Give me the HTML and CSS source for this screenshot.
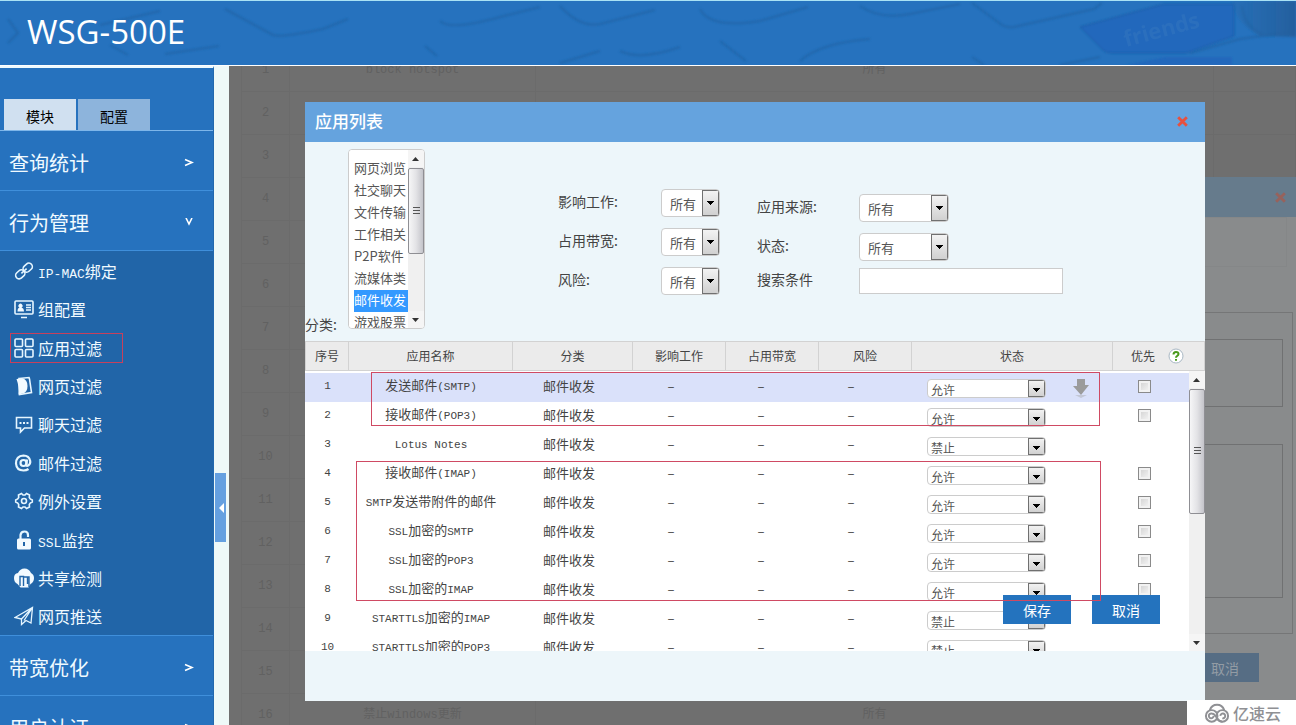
FILE: index.html
```html
<!DOCTYPE html>
<html lang="zh-CN">
<head>
<meta charset="utf-8">
<title>WSG-500E</title>
<link rel="stylesheet" href="styles.css">
</head>
<body>
<header class="banner">
  <svg class="banner-art" viewBox="0 0 1296 64" preserveAspectRatio="xMaxYMin slice" aria-hidden="true">
    <defs>
      <filter id="soft"><feGaussianBlur stdDeviation="1"/></filter>
      <linearGradient id="shade" x1="0" x2="1"><stop offset="0" stop-color="#2565a4" stop-opacity=".3"/><stop offset="1" stop-color="#245f9e"/></linearGradient>
    </defs>
    <g filter="url(#soft)" fill="none" stroke="#1f5f9f" stroke-width="2" opacity=".6">
      <path d="M8 18l10 14-10 10M100 24l60-14M110 44l18 10M165 53l54-8M225 8l48 26q8 3 50-6l25-10M425 45l12 10M440 20q10 10 60-4l40-10M560 5q20 22 40 18l55-14M620 50q20 10 60-4M700 8q10 20 60 12l48-14M800 60q20-18 70-22M860 5q20 14 50 8l50-10M720 40l26 20M560 62l40-12"/>
      <path d="M972 2l30 22q5 3 12 2l80-18 8-6M972 56l12 8M1100 56l-40 8M1190 52l50-14 56-8M1242 5q2 20 20 28"/>
    </g>
    <path filter="url(#soft)" fill="#2068bc" stroke="#1d5ca6" d="M1080 26l84-23h70v32l-48 17h-74q-6 0-9-3z"/>
    <path filter="url(#soft)" fill="url(#shade)" d="M1232 0h64v36l-36-1q-24-12-28-35z"/>
    <path filter="url(#soft)" fill="#2068bc" d="M1126 64l40-8h66v8z"/>
    <text class="banner-key" x="1126" y="46" transform="rotate(-15 1126 46)">friends</text>
  </svg>
  <h1 class="banner-title">WSG-500E</h1>
</header>
<div class="layout">
  <nav class="sidebar">
    <div class="tabs">
      <button class="tab tab-active" type="button">模块</button>
      <button class="tab" type="button">配置</button>
    </div>
    <a class="section" href="#">查询统计<svg class="chev" viewBox="0 0 10 10"><path d="M1 1.500l7 3-7 3"/></svg></a>
    <a class="section" href="#">行为管理<svg class="chev" viewBox="0 0 10 10"><path d="M2 0l3 6 3-6"/></svg></a>
    <ul class="submenu">
      <li><a class="item" href="#"><svg class="ico" viewBox="0 0 20 20"><g transform="rotate(-42 10 10)"><rect x="0" y="6.500" width="10" height="7" rx="3.500"/><rect x="10" y="6.500" width="10" height="7" rx="3.500"/><path d="M6.500 10h7"/></g></svg><span><span class="latin">IP-MAC</span>绑定</span></a></li>
      <li><a class="item" href="#"><svg class="ico" viewBox="0 0 20 20"><rect x="1" y="2" width="18" height="13" rx="1"/><path d="M7 18.500h6M12 6h5M12 8.500h5M12 11h5"/><path class="solid" d="M3.500 12.500c0-3 1-3.500 2-4a2 2 0 1 1 2 0c1 .500 2.500 1 2.500 4z"/></svg>组配置</a></li>
      <li><a class="item item-marked" href="#"><svg class="ico" viewBox="0 0 20 20"><rect x="1" y="1" width="7.500" height="7.500" rx="1"/><rect x="11.500" y="1" width="7.500" height="7.500" rx="1"/><rect x="1" y="11.500" width="7.500" height="7.500" rx="1"/><rect x="11.500" y="11.500" width="7.500" height="7.500" rx="1"/></svg>应用过滤</a></li>
      <li><a class="item" href="#"><svg class="ico" viewBox="0 0 20 20"><path d="M5 2.500l10-1 .500 1.500 2 13.500-12 2z"/><path class="solid" d="M2.500 3l6-.5q5 1 5 7.500t-5 7.500l-4 1q1-7-2-15.500z"/></svg>网页过滤</a></li>
      <li><a class="item" href="#"><svg class="ico" viewBox="0 0 20 20"><path d="M2.500 3.500h15v10.500h-7l-4 4v-4h-4z"/><path class="dots" d="M5.500 9h2M9 9h2M12.500 9h2"/></svg>聊天过滤</a></li>
      <li><a class="item" href="#"><svg class="ico" viewBox="0 0 20 20"><g class="bold"><circle cx="9.500" cy="10" r="3"/><path d="M13 6.500l-.8 5q.2 2 2 1 2.500-1.500 2-4.500Q15 2.500 9.500 2.500 2 3 2 10.500 2.500 17.500 9.500 17.500q3 0 5-1.500"/></g></svg>邮件过滤</a></li>
      <li><a class="item" href="#"><svg class="ico" viewBox="0 0 20 20"><circle cx="10" cy="10" r="2.500"/><path d="M7.500 2.500L9 4h2l1.500-1.500 3 1.500-.2 2.500 1 1.500 2 1v2l-2 1-1 1.500.2 2.500-3 1.500L11 16H9l-1.500 1.500-3-1.500.2-2.500-1-1.500-2-1V9l2-1 1-1.500L4.500 4z"/></svg>例外设置</a></li>
      <li><a class="item" href="#"><svg class="ico" viewBox="0 0 20 20"><path class="bold" d="M6.500 9V5q.5-3.500 4-3.500T14 5v2"/><path class="solid" fill-rule="evenodd" d="M4.500 8.500h11q1.500 0 1.500 1.500v8q0 1.500-1.500 1.500h-11Q3 19.500 3 18v-8q0-1.500 1.500-1.500zM9 12v4h2v-4z"/></svg><span><span class="latin">SSL</span>监控</span></a></li>
      <li><a class="item" href="#"><svg class="ico" viewBox="0 0 20 20"><path class="solid" d="M4 5Q6 .500 10.500.500 15 .500 17 5q3 1.500 3 5 0 4-3.500 6l-2 3.500h-8L3.500 16Q0 14.500 0 10t4-5z"/><path class="knock" d="M6 18V8.500h3.500V18M9.500 9h4v7M13.500 9h1.500v10"/></svg>共享检测</a></li>
      <li><a class="item" href="#"><svg class="ico" viewBox="0 0 20 20"><path class="thin" d="M1 11.500L18.500 1.500 17 17l-5-2.500-4.500 4V13zM7.500 13l11-11.500L10 14.500"/></svg>网页推送</a></li>
    </ul>
    <a class="section" href="#">带宽优化<svg class="chev" viewBox="0 0 10 10"><path d="M1 1.500l7 3-7 3"/></svg></a>
    <a class="section" href="#">用户认证<svg class="chev" viewBox="0 0 10 10"><path d="M1 1.500l7 3-7 3"/></svg></a>
  </nav>
  <div class="gutter"><button class="collapse" type="button" aria-label="收起"><svg viewBox="0 0 6 10"><path d="M6 0v10L1 5z"/></svg></button></div>
  <main class="stage">
    <table class="rules">
      <colgroup><col class="r-no"><col class="r-name"><col><col class="r-op"></colgroup>
      <tr><td>1</td><td>block hotspot</td><td>所有</td><td></td></tr>
      <tr><td>2</td><td></td><td></td><td></td></tr>
      <tr><td>3</td><td></td><td></td><td></td></tr>
      <tr><td>4</td><td></td><td></td><td></td></tr>
      <tr><td>5</td><td></td><td></td><td></td></tr>
      <tr><td>6</td><td></td><td></td><td></td></tr>
      <tr><td>7</td><td></td><td></td><td></td></tr>
      <tr><td>8</td><td></td><td></td><td></td></tr>
      <tr><td>9</td><td></td><td></td><td></td></tr>
      <tr><td>10</td><td></td><td></td><td></td></tr>
      <tr><td>11</td><td></td><td></td><td></td></tr>
      <tr><td>12</td><td></td><td></td><td></td></tr>
      <tr><td>13</td><td></td><td></td><td></td></tr>
      <tr><td>14</td><td></td><td></td><td></td></tr>
      <tr><td>15</td><td></td><td></td><td></td></tr>
      <tr><td>16</td><td>禁止windows更新</td><td>所有</td><td></td></tr>
    </table>

    <section class="under">
      <div class="under-head"><svg class="x" viewBox="0 0 12 12"><path d="M2 2l8 8M10 2l-8 8"/></svg></div>
      <div class="under-strip"></div>
      <div class="under-box"><div class="under-a"></div><div class="under-b"></div></div>
      <div class="under-foot"><button class="under-btn" type="button">取消</button></div>
    </section>

    <section class="modal" role="dialog" aria-labelledby="dlg-title">
      <div class="modal-head">
        <h2 id="dlg-title" class="modal-title">应用列表</h2>
        <button class="close" type="button" aria-label="关闭"><svg class="x" viewBox="0 0 12 12"><path d="M2 2l8 8M10 2l-8 8"/></svg></button>
      </div>
      <form class="filters">
        <label class="cat-label" for="cat">分类:</label>
        <div class="cat-box">
          <select class="cat-list" id="cat" size="8">
            <option>网页浏览</option><option>社交聊天</option><option>文件传输</option><option>工作相关</option><option>P2P软件</option><option>流媒体类</option><option class="chosen">邮件收发</option><option>游戏股票</option>
          </select>
          <div class="bar" aria-hidden="true">
            <svg class="bar-end" viewBox="0 0 16 17"><path d="M4 11h7L7.500 7z"/></svg>
            <div class="bar-track"><div class="bar-thumb bar-thumb-cat"></div></div>
            <svg class="bar-end" viewBox="0 0 16 17"><path d="M4 7h7l-3.500 4z"/></svg>
          </div>
        </div>
        <div class="group group-a">
          <label for="f1">影响工作:</label><select class="pick" id="f1"><option>所有</option></select>
          <label for="f2">占用带宽:</label><select class="pick" id="f2"><option>所有</option></select>
          <label for="f3">风险:</label><select class="pick" id="f3"><option>所有</option></select>
        </div>
        <div class="group group-b">
          <label for="f4">应用来源:</label><select class="pick pick-wide" id="f4"><option>所有</option></select>
          <label for="f5">状态:</label><select class="pick pick-wide" id="f5"><option>所有</option></select>
          <label class="search-label" for="f6">搜索条件</label><input class="search" id="f6" type="text">
        </div>
      </form>
      <table class="grid-head">
        <colgroup><col class="h-no"><col><col class="h-cat"><col class="h-mid"><col class="h-mid"><col class="h-mid"><col class="h-state"><col class="h-prio"></colgroup>
        <tr><th>序号</th><th>应用名称</th><th>分类</th><th>影响工作</th><th>占用带宽</th><th>风险</th><th>状态</th><th><span class="prio">优先<svg class="help" viewBox="0 0 16 16"><circle cx="8" cy="8" r="7"/><path d="M5.500 6.500Q5.500 4 8 4t2.500 2q0 1-1.300 1.800Q8 8.500 8 9.800M8 11v1.800"/></svg></span></th></tr>
      </table>
      <div class="grid-area">
        <div class="grid-scroll">
          <table class="grid">
            <colgroup><col class="b-no"><col><col class="b-cat"><col class="b-dash"><col class="b-dash"><col class="b-dash"><col class="b-state"><col class="b-prio"></colgroup>
            <tr class="hot"><td>1</td><td>发送邮件<span class="mono">(SMTP)</span></td><td>邮件收发</td><td>–</td><td>–</td><td>–</td><td class="state"><div class="state-in"><select class="mini" aria-label="状态 1"><option>允许</option></select><svg class="down" viewBox="0 0 16 20"><path class="down-shadow" d="M2 17h12l-6 3z"/><path d="M4 1h8v6h4l-8 10L0 8h4z"/></svg></div></td><td><input class="tick" type="checkbox" aria-label="优先 1"></td></tr>
            <tr><td>2</td><td>接收邮件<span class="mono">(POP3)</span></td><td>邮件收发</td><td>–</td><td>–</td><td>–</td><td class="state"><div class="state-in"><select class="mini" aria-label="状态 2"><option>允许</option></select></div></td><td><input class="tick" type="checkbox" aria-label="优先 2"></td></tr>
            <tr><td>3</td><td><span class="mono">Lotus Notes</span></td><td>邮件收发</td><td>–</td><td>–</td><td>–</td><td class="state"><div class="state-in"><select class="mini" aria-label="状态 3"><option>禁止</option></select></div></td><td></td></tr>
            <tr><td>4</td><td>接收邮件<span class="mono">(IMAP)</span></td><td>邮件收发</td><td>–</td><td>–</td><td>–</td><td class="state"><div class="state-in"><select class="mini" aria-label="状态 4"><option>允许</option></select></div></td><td><input class="tick" type="checkbox" aria-label="优先 4"></td></tr>
            <tr><td>5</td><td><span class="mono">SMTP</span>发送带附件的邮件</td><td>邮件收发</td><td>–</td><td>–</td><td>–</td><td class="state"><div class="state-in"><select class="mini" aria-label="状态 5"><option>允许</option></select></div></td><td><input class="tick" type="checkbox" aria-label="优先 5"></td></tr>
            <tr><td>6</td><td><span class="mono">SSL</span>加密的<span class="mono">SMTP</span></td><td>邮件收发</td><td>–</td><td>–</td><td>–</td><td class="state"><div class="state-in"><select class="mini" aria-label="状态 6"><option>允许</option></select></div></td><td><input class="tick" type="checkbox" aria-label="优先 6"></td></tr>
            <tr><td>7</td><td><span class="mono">SSL</span>加密的<span class="mono">POP3</span></td><td>邮件收发</td><td>–</td><td>–</td><td>–</td><td class="state"><div class="state-in"><select class="mini" aria-label="状态 7"><option>允许</option></select></div></td><td><input class="tick" type="checkbox" aria-label="优先 7"></td></tr>
            <tr><td>8</td><td><span class="mono">SSL</span>加密的<span class="mono">IMAP</span></td><td>邮件收发</td><td>–</td><td>–</td><td>–</td><td class="state"><div class="state-in"><select class="mini" aria-label="状态 8"><option>允许</option></select></div></td><td><input class="tick" type="checkbox" aria-label="优先 8"></td></tr>
            <tr><td>9</td><td><span class="mono">STARTTLS</span>加密的<span class="mono">IMAP</span></td><td>邮件收发</td><td>–</td><td>–</td><td>–</td><td class="state"><div class="state-in"><select class="mini" aria-label="状态 9"><option>禁止</option></select></div></td><td></td></tr>
            <tr><td>10</td><td><span class="mono">STARTTLS</span>加密的<span class="mono">POP3</span></td><td>邮件收发</td><td>–</td><td>–</td><td>–</td><td class="state"><div class="state-in"><select class="mini" aria-label="状态 10"><option>禁止</option></select></div></td><td></td></tr>
          </table>
        </div>
        <div class="bar" aria-hidden="true">
          <svg class="bar-end" viewBox="0 0 16 17"><path d="M4 11h7L7.500 7z"/></svg>
          <div class="bar-track"><div class="bar-thumb bar-thumb-grid"></div></div>
          <svg class="bar-end" viewBox="0 0 16 17"><path d="M4 7h7l-3.500 4z"/></svg>
        </div>
      </div>
      <div class="actions">
        <button class="btn" type="button">保存</button>
        <button class="btn" type="button">取消</button>
      </div>
      <div class="mark mark-top"></div>
      <div class="mark mark-mid"></div>
    </section>
  </main>
</div>
<div class="brand">
  <svg class="brand-logo" viewBox="0 0 28 20"><circle cx="8" cy="13" r="6"/><circle cx="19" cy="13" r="6"/><path d="M6 7Q8 1.500 13.500 1.500 19 1.500 21 7M10 13a2.500 2.500 0 1 1-2-2.500q2.500 0 5 4 2.500 4.500 6 4.500M17 13a2.500 2.500 0 1 1 2 2.500"/></svg>
  <span>亿速云</span>
</div>
</body>
</html>
```

FILE: styles.css
```css
* { box-sizing: border-box; }

body {
  margin: 0;
  height: 100vh;
  overflow: hidden;
  display: flex;
  flex-direction: column;
  background: #eef7f9;
  color: #444;
  font: 13px/20px "Liberation Serif", "Noto Sans CJK SC", serif;
}

button, select, input { font-family: "Noto Sans CJK SC", sans-serif; }
a { color: inherit; text-decoration: none; }
table { border-collapse: collapse; table-layout: fixed; width: 100%; }

/* banner */
.banner {
  position: relative;
  flex: none;
  height: 66px;
  overflow: hidden;
  background: #2672be;
  border-top: 1px solid #a9e2f5;
  border-bottom: 1px solid #fff;
}
.banner-art { position: absolute; inset: 0; width: 100%; height: 100%; }
.banner-key { font: bold 22px "Open Sans", sans-serif; fill: #3274bf; opacity: .6; }
.banner-title {
  position: relative;
  margin: 0;
  padding: 6px 27px;
  color: #fff;
  font: 400 33px/50px "Open Sans", sans-serif;
}

.layout { display: flex; flex: 1; min-height: 0; }

/* sidebar */
.sidebar {
  flex: none;
  width: 214px;
  overflow: hidden;
  background: #2672be;
  border-top: 2px solid #eefaff;
  border-right: 1px solid #2268ae;
  color: #f0faff;
}
.tabs {
  display: flex;
  gap: 2px;
  padding: 31px 4px 0;
  border-bottom: 1px solid #7db6ea;
}
.tab {
  width: 72px;
  height: 31px;
  padding: 3px 0 0;
  border: 0;
  background: #8db4dc;
  color: #000;
  font-size: 14px;
}
.tab-active { background: #d0e0f0; }
.section {
  display: flex;
  align-items: center;
  justify-content: space-between;
  height: 60px;
  padding: 5px 19px 0 9px;
  border-bottom: 1px solid #3f8fdb;
  font: 20px/30px "Noto Sans CJK SC", sans-serif;
}
.chev { width: 10px; height: 10px; fill: none; stroke: #fff; stroke-width: 1.6; }
.submenu {
  display: flex;
  flex-direction: column;
  height: 385px;
  margin: 0;
  padding: 0;
  list-style: none;
  background: #2165a8;
  border-bottom: 1px solid #3f8fdb;
}
.submenu li { flex: 1; display: flex; align-items: center; padding: 1px 0 0 10px; }
.item {
  display: flex;
  align-items: center;
  gap: 4px;
  height: 30px;
  padding: 0 20px 0 3px;
  border: 1px solid transparent;
  font: 16px/28px "Noto Sans CJK SC", sans-serif;
}
.item-marked { border-color: #c8405c; }
.latin { font: 13px/1 "Liberation Mono", monospace; }
.ico { width: 20px; height: 20px; fill: none; stroke: #e6f6ff; stroke-width: 1.6; }
.ico .solid { fill: #f2faff; stroke: none; }
.ico .bold { stroke-width: 2.2; }
.ico .thin { stroke-width: 1.3; }
.ico .dots { stroke-width: 2; }
.ico .knock { stroke: #2165a8; stroke-width: 1.4; }

.gutter {
  flex: none;
  display: flex;
  width: 15px;
  padding: 407px 3px 0 1px;
  background: #eef9f8;
}
.collapse {
  width: 11px;
  height: 69px;
  padding: 0 0 0 3px;
  border: 0;
  background: #65a0e0;
}
.collapse svg { display: block; width: 6px; height: 10px; fill: #fff; }

/* dimmed page behind the dialogs */
.stage { position: relative; flex: 1; overflow: hidden; background: #6f6f6f; }
.rules { width: calc(100% - 12px); margin: -18px 0 0 12px; color: #616161; font: 12px/18px "Liberation Mono", "Noto Sans CJK SC", monospace; }
.rules td { height: 43px; padding: 0; border: 1px solid #6b6b6b; text-align: center; }
.r-no { width: 48px; }
.r-name { width: 246px; }
.r-op { width: 82px; }
.under {
  position: absolute;
  top: 111px;
  right: 0;
  width: 60%;
  height: 523px;
  background: #898b8c;
}
.under-head {
  display: flex;
  justify-content: flex-end;
  align-items: center;
  height: 40px;
  padding-right: 9px;
  background: #667b8c;
}
.under-head .x { stroke: #97625c; }
.under-strip { height: 50px; margin-right: 9px; border: 1px solid #858788; }
.under-box {
  display: flex;
  flex-direction: column;
  gap: 37px;
  height: 322px;
  margin: 45px 3px 0 0;
  padding: 26px 9px;
  border: 1px solid #757677;
}
.under-a { height: 68px; border: 1px solid #707172; }
.under-b { height: 154px; border: 1px solid #707172; }
.under-foot { display: flex; justify-content: flex-end; padding: 19px 37px 0 0; }
.under-btn { width: 68px; height: 29px; padding: 0; border: 0; background: #566d84; color: #939ca4; font-size: 14px; }

/* dialog */
.modal {
  position: absolute;
  top: 36px;
  left: 76px;
  right: 91px;
  height: 599px;
  background: #edf6fa;
}
.modal-head {
  display: flex;
  align-items: center;
  justify-content: space-between;
  height: 40px;
  padding: 0 16px 2px 10px;
  background: #65a3de;
}
.modal-title { margin: 0; color: #fff; font: 500 17px/36px "Noto Sans CJK SC", sans-serif; }
.close { display: flex; padding: 0; border: 0; background: none; }
.x { width: 13px; height: 13px; fill: none; stroke: #e8503e; stroke-width: 2.6; }

.filters {
  display: flex;
  height: 199px;
  padding-top: 7px;
  font: 14px/20px "Noto Sans CJK SC", sans-serif;
}
.cat-label { width: 43px; padding-top: 165px; }
.cat-box {
  display: flex;
  width: 77px;
  height: 180px;
  overflow: hidden;
  border: 1px solid #ccc;
  border-radius: 4px;
  background: #fff;
}
.cat-list {
  flex: 1;
  min-width: 0;
  height: 178px;
  padding: 8px 0 0 5px;
  overflow: hidden;
  scrollbar-width: none;
  border: 0;
  background: #fff;
  color: #555;
  font-size: 13px;
}
.cat-list option { height: 22px; min-height: 22px; padding: 0; line-height: 22px; }
.cat-list .chosen { background: #3399ff; color: #fff; }

.group { display: grid; align-content: start; align-items: center; row-gap: 11px; }
.group-a { grid-template-columns: 103px 58px; margin-left: 133px; padding-top: 40px; }
.group-b { grid-template-columns: 102px 204px; grid-template-rows: 28px 28px 26px; margin-left: 38px; padding-top: 45px; }
.group label { line-height: 24px; padding-bottom: 4px; }

.pick, .mini {
  appearance: none;
  border: 1px solid #ccc;
  border-radius: 4px;
  color: #555;
  background-color: #fff;
  background-image:
    linear-gradient(#000, #000), linear-gradient(#000, #000), linear-gradient(#000, #000), linear-gradient(#000, #000),
    linear-gradient(#707070, #707070), linear-gradient(#707070, #707070), linear-gradient(#707070, #707070), linear-gradient(#707070, #707070),
    linear-gradient(#f4f4f4, #cfcfcf);
  background-repeat: no-repeat;
  background-size: 7px 1px, 5px 1px, 3px 1px, 1px 1px, 17px 1px, 17px 1px, 1px 100%, 1px 100%, 17px 100%;
  background-position:
    right 5px top 11px, right 6px top 12px, right 7px top 13px, right 8px top 14px,
    right 0 top 0, right 0 bottom 0, right 0 top 0, right 16px top 0, right 0 top 0;
}
.pick { width: 59px; height: 28px; padding: 0 17px 0 8px; font-size: 13px; }
.pick-wide { width: 90px; }
.mini {
  flex: none;
  width: 119px;
  height: 19px;
  padding: 2px 18px 0 3px;
  font-size: 12px;
  line-height: 15px;
  background-position:
    right 5px top 8px, right 6px top 9px, right 7px top 10px, right 8px top 11px,
    right 0 top 0, right 0 bottom 0, right 0 top 0, right 16px top 0, right 0 top 0;
}
.search { width: 204px; height: 26px; border: 1px solid #ccc; background: #fff; }
.search, .search-label { margin-top: -8px; }

.grid-head th {
  height: 29px;
  padding: 0;
  background: #ebebeb;
  border: 1px solid #d2d2d2;
  font: 12px/26px "Noto Sans CJK SC", sans-serif;
}
.prio { display: flex; align-items: center; justify-content: flex-end; gap: 13px; padding-right: 20px; }
.help { width: 16px; height: 16px; fill: #fff; stroke: #a9b8c4; }
.help path { fill: none; stroke: #4a9a1c; stroke-width: 2; }
.h-no { width: 43px; }
.h-cat { width: 120px; }
.h-mid { width: 93px; }
.h-state { width: 201px; }
.h-prio { width: 92px; }

.grid-area { display: flex; height: 280px; background: #fff; }
.grid-scroll { flex: 1; min-width: 0; overflow: hidden; }
.grid { margin: 2px 0 0; font: 13px/20px "Noto Sans CJK SC", sans-serif; }
.grid td { height: 29px; padding: 0 0 4px; text-align: center; }
.grid td:first-child, .mono { font-family: "Liberation Mono", monospace; font-size: 11px; }
.grid .state { padding: 0; }
.hot { background: #dae1fa; }
.b-no { width: 45px; }
.b-cat { width: 114px; }
.b-dash { width: 90px; }
.b-state { width: 204px; }
.b-prio { width: 89px; }
.state-in { display: flex; align-items: center; justify-content: space-between; height: 29px; padding: 1px 11px 0 31px; }
.down { width: 16px; height: 20px; fill: #9b9b9b; }
.down-shadow { fill: #c3c7d6; }
.tick {
  appearance: none;
  display: inline-block;
  width: 13px;
  height: 13px;
  margin: 0;
  vertical-align: middle;
  border: 1px solid #8a8a8a;
  background: linear-gradient(135deg, #cfcfcf, #f8f8f8);
  box-shadow: inset 0 0 0 2px #f2f2f2;
}

/* scroll bars */
.bar {
  flex: none;
  display: flex;
  flex-direction: column;
  width: 16px;
  background: #f0f0f0;
}
.bar-end { flex: none; display: block; width: 16px; height: 17px; fill: #333; background: #f5f5f5; }
.bar-track { flex: 1; padding-top: 1px; }
.bar-thumb {
  border: 1px solid #8f8f94;
  border-radius: 2px;
  background:
    repeating-linear-gradient(#555 0 1px, transparent 1px 3px) center / 7px 8px no-repeat,
    linear-gradient(90deg, #f6f6f7, #e3e3e6 50%, #c4c4ca);
}
.bar-thumb-cat { height: 60%; }
.bar-thumb-grid { height: 51%; }

.actions { position: absolute; top: 493px; right: 45px; display: flex; gap: 21px; }
.btn { width: 68px; height: 29px; padding: 0; border: 0; background: #2473be; color: #fff; font-size: 14px; }

.mark { position: absolute; border: 1px solid #cf4a63; pointer-events: none; }
.mark-top { top: 270px; left: 66px; right: 105px; height: 54px; }
.mark-mid { top: 359px; left: 51px; right: 104px; height: 140px; }

/* corner brand */
.brand {
  position: fixed;
  right: 0;
  bottom: 0;
  display: flex;
  align-items: center;
  gap: 2px;
  width: 109px;
  height: 25px;
  padding-left: 17px;
  background: #fff;
  color: #8f9094;
  font: 500 16px/24px "Noto Sans CJK SC", sans-serif;
}
.brand-logo { width: 27px; height: 20px; fill: none; stroke: #8f9094; stroke-width: 2; }
```
